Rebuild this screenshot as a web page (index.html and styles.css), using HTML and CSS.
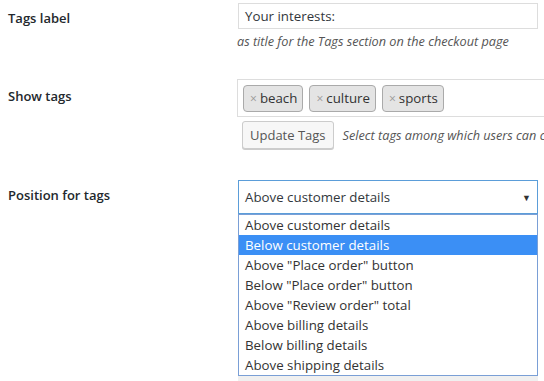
FILE: index.html
```html
<!DOCTYPE html>
<html>
<head>
<meta charset="utf-8">
<link rel="stylesheet" href="styles.css">
</head>
<body>
<div class="page">
  <div class="row row-label">
    <div class="label">Tags label</div>
    <div class="field">
      <div class="text-input">Your interests:</div>
      <p class="desc">as title for the Tags section on the checkout page</p>
    </div>
  </div>

  <div class="row row-tags">
    <div class="label">Show tags</div>
    <div class="field">
      <div class="tag-box">
        <span class="tag"><span class="x">×</span>beach</span>
        <span class="tag"><span class="x">×</span>culture</span>
        <span class="tag"><span class="x">×</span>sports</span>
      </div>
      <div class="btn-line">
        <span class="button">Update Tags</span>
        <span class="desc inline">Select tags among which users can choose</span>
      </div>
    </div>
  </div>

  <div class="row row-pos">
    <div class="label">Position for tags</div>
    <div class="field">
      <div class="select">
        <span>Above customer details</span>
        <span class="arrow">▼</span>
      </div>
      <ul class="options">
        <li>Above customer details</li>
        <li class="selected">Below customer details</li>
        <li>Above "Place order" button</li>
        <li>Below "Place order" button</li>
        <li>Above "Review order" total</li>
        <li>Above billing details</li>
        <li>Below billing details</li>
        <li>Above shipping details</li>
      </ul>
      <div class="shadow"></div>
    </div>
  </div>
</div>
</body>
</html>
```

FILE: styles.css
```css
html, body {
  margin: 0;
  padding: 0;
  background: #fff;
  overflow: hidden;
}
body {
  font-family: "Open Sans", "Noto Sans", sans-serif;
  font-size: 13px;
  color: #32373c;
}
.page {
  padding: 3px 0 0 8px;
  width: 700px;
}
.row {
  display: grid;
  grid-template-columns: 230px 420px;
}
.label {
  font-size: 13px;
  font-weight: 600;
  color: #23282d;
  line-height: 20px;
}
.row-label .label { padding-top: 5px; }
.row-tags .label { padding-top: 7px; }
.row-pos .label { padding-top: 5px; }

.text-input {
  box-sizing: border-box;
  width: 300px;
  height: 26px;
  border: 1px solid #ddd;
  padding: 0 6px;
  line-height: 24px;
  font-size: 13.3px;
  color: #32373c;
}
.desc {
  margin: 3px 0 0 -1px;
  font-style: italic;
  color: #555;
  line-height: 18px;
  font-size: 12.7px;
  white-space: nowrap;
}
.row-tags { margin-top: 29px; }
.tag-box {
  margin-left: -1px;
  box-sizing: border-box;
  width: 420px;
  height: 38px;
  border: 1px solid #ddd;
  padding: 5px 0 0 5px;
  display: flex;
  gap: 6px;
}
.tag {
  box-sizing: border-box;
  height: 27px;
  padding: 0 5px 0 6px;
  border: 1px solid #aaa;
  border-radius: 4px;
  background: #e4e4e4;
  color: #333;
  line-height: 25px;
  font-size: 13.3px;
}
.tag .x {
  color: #999;
  font-size: 12px;
  margin-right: 3px;
}
.btn-line {
  margin-top: 4px;
  padding-left: 4px;
  display: flex;
  align-items: center;
  gap: 9px;
}
.button {
  box-sizing: border-box;
  height: 28px;
  padding: 0 7px;
  border: 1px solid #ccc;
  border-radius: 3px;
  background: #f7f7f7;
  box-shadow: 0 1px 0 #ccc;
  color: #555;
  line-height: 26px;
  font-size: 13px;
}
.desc.inline { margin: 0; }

.row-pos { margin-top: 31px; }
.select {
  box-sizing: border-box;
  width: 300px;
  height: 34px;
  border: 1px solid #5b9dd9;
  padding: 0 6px;
  display: flex;
  justify-content: space-between;
  align-items: center;
  color: #32373c;
  font-size: 13.3px;
}
.arrow {
  font-size: 9px;
  color: #333;
}
.options {
  list-style: none;
  margin: 0;
  padding: 0;
  box-sizing: border-box;
  width: 300px;
  border: 1px solid #7a9fd6;
  background: #fff;
}
.options li {
  height: 20px;
  line-height: 20px;
  padding: 0 6px;
  color: #333;
  font-size: 13.3px;
}
.options li.selected {
  background: #3b8ff5;
  color: #fff;
}
.shadow {
  width: 300px;
  height: 8px;
  background: #f0f0f0;
}
```
